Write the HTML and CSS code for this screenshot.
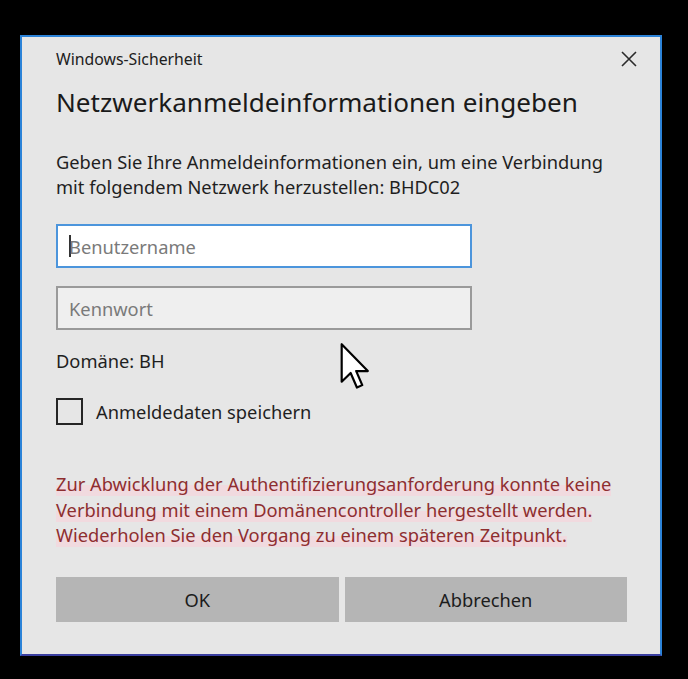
FILE: index.html
```html
<!DOCTYPE html>
<html>
    <head>
        <meta charset="utf-8">
        <title>Windows-Sicherheit</title>
        <link rel="stylesheet" href="styles.css">
    </head>
    <body>
        <div class="dialog">
            <div class="titlebar">
                <span class="caption">Windows-Sicherheit</span>
                <span class="close">
                    <svg width="16" height="16" viewBox="0 0 16 16"><path d="M1 1 L15 15 M15 1 L1 15" stroke="#2b2b2b" stroke-width="1.6"/></svg>
                </span>
            </div>
            <h1>Netzwerkanmeldeinformationen eingeben</h1>
            <p class="intro">
                Geben Sie Ihre Anmeldeinformationen ein, um eine Verbindung<br>
                mit folgendem Netzwerk herzustellen: BHDC02
            </p>
            <div class="field focused"><span class="caret"></span><span class="hint">Benutzername</span></div>
            <div class="field"><span class="hint">Kennwort</span></div>
            <p class="domain">Domäne: BH</p>
            <label class="remember"><span class="box"></span>Anmeldedaten speichern</label>
            <p class="error">
                <span>Zur Abwicklung der Authentifizierungsanforderung konnte keine</span><br>
                <span>Verbindung mit einem Domänencontroller hergestellt werden.</span><br>
                <span>Wiederholen Sie den Vorgang zu einem späteren Zeitpunkt.</span>
            </p>
            <div class="buttons">
                <div class="button">OK</div>
                <div class="button">Abbrechen</div>
            </div>
            <svg class="pointer" width="30" height="46" viewBox="0 0 12 19"><path d="M0.5 0.5 L0.5 16 L4.2 12.4 L6.8 18.4 L9 17.4 L6.5 11.6 L11.3 11.6 Z" fill="#ffffff" stroke="#000000" stroke-width="0.9" stroke-linejoin="round"/></svg>
        </div>
    </body>
</html>
```
FILE: styles.css
```css
body {
    margin: 0;
    background: #000000;
    font-family: "Noto Sans", "Open Sans", sans-serif;
    color: #1f1f1f;
}

.dialog {
    position: relative;
    margin: 35px 0 0 20px;
    width: 642px;
    height: 621px;
    box-sizing: border-box;
    border: 2px solid #2c83d8;
    border-bottom-color: #3b3fa0;
    background: #e6e6e6;
    padding: 0 33px 0 34px;
}

.titlebar {
    display: flex;
    align-items: center;
    justify-content: space-between;
    height: 44px;
}

.caption {
    font-size: 15.8px;
    color: #202020;
}

.close {
    display: flex;
    margin-right: -10px;
}

h1 {
    margin: 5px 0 0 0;
    font-size: 26.1px;
    font-weight: normal;
    line-height: 32px;
    color: #1a1a1a;
}

.intro {
    margin: 31px 0 0 0;
    font-size: 18.3px;
    line-height: 25px;
}

.field {
    display: flex;
    align-items: center;
    width: 416px;
    height: 44px;
    box-sizing: border-box;
    border: 2px solid #9a9a9a;
    background: #efefef;
    padding-left: 11px;
    margin-top: 18px;
    font-size: 18.3px;
}

.field.focused {
    margin-top: 25px;
    border-color: #4c95dc;
    background: #ffffff;
}

.hint {
    color: #7a7a7a;
}

.caret {
    width: 2px;
    height: 22px;
    background: #333333;
    margin-right: -2px;
}

.domain {
    margin: 18px 0 0 0;
    font-size: 18.3px;
    line-height: 25px;
}

.remember {
    display: flex;
    align-items: center;
    margin-top: 25px;
    font-size: 18.3px;
}

.box {
    width: 27px;
    height: 27px;
    box-sizing: border-box;
    border: 2px solid #262626;
    margin-right: 13px;
}

.error {
    margin: 46px 0 0 0;
    font-size: 18.3px;
    line-height: 25.5px;
    color: #8e2e30;
}

.error span {
    background: linear-gradient(to bottom, transparent 55%, #f1dadf 55%);
}

.buttons {
    display: flex;
    gap: 6px;
    margin-top: 29px;
    width: 571px;
}

.button {
    flex: 1;
    height: 45px;
    display: flex;
    align-items: center;
    justify-content: center;
    background: #b5b5b5;
    font-size: 18.3px;
    color: #1c1c1c;
}

.pointer {
    position: absolute;
    left: 318px;
    top: 306px;
}
```
